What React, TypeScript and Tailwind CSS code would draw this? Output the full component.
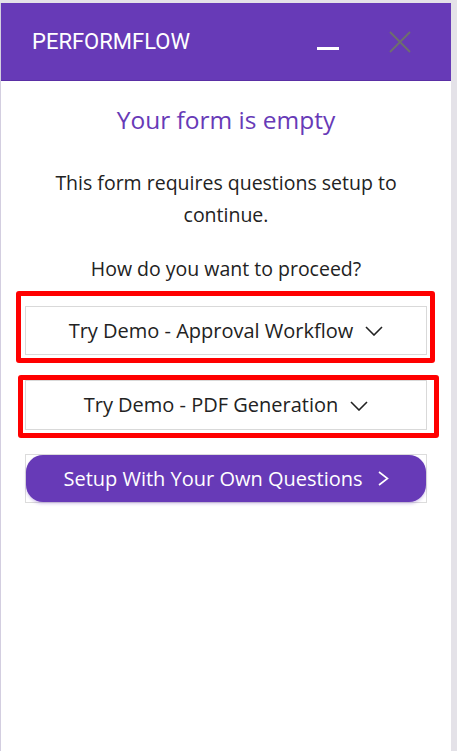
import React from "react";

function ChevronDown({ className }: { className?: string }) {
  return (
    <svg viewBox="0 0 18 10" className={className} fill="none" aria-hidden="true">
      <polyline points="1,1 9,9 17,1" stroke="currentColor" strokeWidth="1.6" />
    </svg>
  );
}

function ChevronRight({ className }: { className?: string }) {
  return (
    <svg viewBox="0 0 11 15" className={className} fill="none" aria-hidden="true">
      <polyline points="1,1 9.5,7.5 1,14" stroke="currentColor" strokeWidth="1.6" />
    </svg>
  );
}

function DemoSelect({ label }: { label: string }) {
  return (
    <div className="flex h-full w-full items-center justify-center gap-[12px] border border-[#d9d9d9] bg-white text-[20px] text-[#222]">
      <span>{label}</span>
      <ChevronDown className="mt-[1px] h-[10px] w-[18px] text-[#222]" />
    </div>
  );
}

export default function App() {
  return (
    <div className="flex h-[751px] w-[457px] bg-[#e4e2e8] pt-[3px]">
      <div className="flex w-[451px] bg-[#d3cee0] pl-[1px]">
        <div className="flex w-[450px] flex-col bg-white font-['Open_Sans',sans-serif]">
          <header className="flex h-[78px] shrink-0 items-center border-b border-[#5a2fa5] bg-[#673ab7] pl-[31px] pr-[40px]">
            <span className="font-['Roboto',sans-serif] text-[22px] text-white">
              PERFORMFLOW
            </span>
            <div className="ml-auto flex items-center gap-[50px]">
              <span className="mt-[14px] block h-[3px] w-[22px] bg-white" />
              <svg viewBox="0 0 22 22" className="h-[22px] w-[22px]" aria-hidden="true">
                <line x1="1" y1="1" x2="21" y2="21" stroke="#6e6e6e" strokeWidth="2" />
                <line x1="21" y1="1" x2="1" y2="21" stroke="#6e6e6e" strokeWidth="2" />
              </svg>
            </div>
          </header>

          <div className="flex flex-col">
            <h1 className="mt-[23px] text-center text-[24.5px] leading-[32px] text-[#673ab7]">
              Your form is empty
            </h1>
            <p className="mx-auto mt-[31px] w-[390px] text-center text-[19.5px] leading-[32px] text-[#222]">
              This form requires questions setup to continue.
            </p>
            <p className="mt-[22px] text-center text-[19.5px] leading-[32px] text-[#222]">
              How do you want to proceed?
            </p>

            <div className="ml-[15px] mt-[6px] h-[72px] w-[419px] rounded-[3px] border-[5px] border-[#ff0000] pb-[3px] pl-[4px] pr-[3px] pt-[10px]">
              <DemoSelect label="Try Demo - Approval Workflow" />
            </div>

            <div className="ml-[17px] mt-[12px] h-[63px] w-[421px] rounded-[3px] border-[5px] border-[#ff0000] pb-[3px] pl-[2px] pr-[7px]">
              <DemoSelect label="Try Demo - PDF Generation" />
            </div>

            <div className="ml-[24px] mt-[16px] h-[49px] w-[402px] border border-[#dcdcdc]">
              <button className="flex h-full w-full items-center justify-center gap-[15px] rounded-[17px] bg-[#673ab7] text-[20px] text-white shadow-[0_2px_3px_rgba(103,58,183,0.25)]">
                <span>Setup With Your Own Questions</span>
                <ChevronRight className="h-[15px] w-[11px]" />
              </button>
            </div>
          </div>
        </div>
      </div>
    </div>
  );
}
